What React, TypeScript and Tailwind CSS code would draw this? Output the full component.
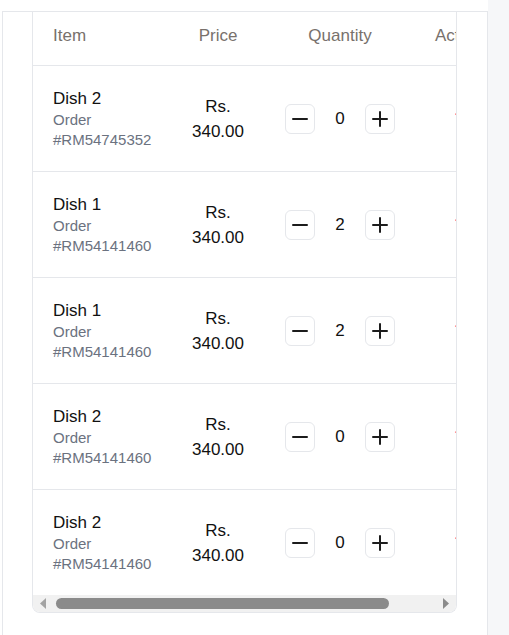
import { Minus, Plus, Trash2 } from "lucide-react";

type Row = { name: string; order: string; price: string; qty: number };

const rows: Row[] = [
  { name: "Dish 2", order: "#RM54745352", price: "340.00", qty: 0 },
  { name: "Dish 1", order: "#RM54141460", price: "340.00", qty: 2 },
  { name: "Dish 1", order: "#RM54141460", price: "340.00", qty: 2 },
  { name: "Dish 2", order: "#RM54141460", price: "340.00", qty: 0 },
  { name: "Dish 2", order: "#RM54141460", price: "340.00", qty: 0 },
];

function QtyButton({ children }: { children: React.ReactNode }) {
  return (
    <button className="w-[30px] h-[30px] rounded-md border border-gray-200 bg-white flex items-center justify-center text-[#1c1c1c]">
      {children}
    </button>
  );
}

export default function App() {
  return (
    <div className="flex min-h-screen bg-white font-['Liberation_Sans',Arial,sans-serif]">
      <div className="ml-[2px] mt-[11px] w-[486px] shrink-0 border-l border-r border-t border-gray-200 pl-[29px] pr-[30px]">
        {/* Orders table card */}
        <div className="border-x border-b border-gray-200 rounded-b-lg overflow-hidden">
          <div className="w-max">
            {/* Header */}
            <div className="grid grid-cols-[142px_86px_158px_120px] h-[54px] pb-[6px] border-b border-gray-200 items-center text-[17px] text-[#78716c]">
              <div className="pl-5">Item</div>
              <div className="text-center">Price</div>
              <div className="text-center">Quantity</div>
              <div className="pl-4">Actions</div>
            </div>

            {rows.map((r, i) => (
              <div
                key={i}
                className={`grid grid-cols-[142px_86px_158px_120px] items-center ${
                  i < rows.length - 1 ? "h-[106px] border-b border-gray-200" : "h-[105px]"
                }`}>
                <div className="pl-5 pr-3">
                  <div className="text-[17px] leading-[22px] text-[#111]">{r.name}</div>
                  <div className="text-[15px] leading-[20px] text-[#6b7280]">
                    Order {r.order}
                  </div>
                </div>
                <div className="px-3 text-center text-[17px] leading-[25px] text-[#111]">
                  Rs. {r.price}
                </div>
                <div className="flex items-center justify-center">
                  <QtyButton>
                    <Minus size={24} strokeWidth={2} />
                  </QtyButton>
                  <span className="w-[50px] text-center text-[17px] text-[#111]">{r.qty}</span>
                  <QtyButton>
                    <Plus size={24} strokeWidth={2} />
                  </QtyButton>
                </div>
                <div className="pl-[34px] text-red-400">
                  <Trash2 size={20} strokeWidth={1.5} />
                </div>
              </div>
            ))}
          </div>

          {/* Horizontal scrollbar */}
          <div className="h-[17px] bg-[#f1f1f1] flex items-center px-[7px]">
            <svg width="7" height="11" viewBox="0 0 7 11" className="shrink-0">
              <path d="M6 0 L0 5.5 L6 11 Z" fill="#a3a3a3" />
            </svg>
            <div className="ml-[9px] w-[333px] h-[11px] rounded-full bg-[#8b8b8b]" />
            <div className="flex-1" />
            <svg width="7" height="11" viewBox="0 0 7 11" className="shrink-0">
              <path d="M1 0 L7 5.5 L1 11 Z" fill="#8b8b8b" />
            </svg>
          </div>
        </div>
      </div>
      <div className="flex-1 bg-[#f6f7f9]" />
    </div>
  );
}
